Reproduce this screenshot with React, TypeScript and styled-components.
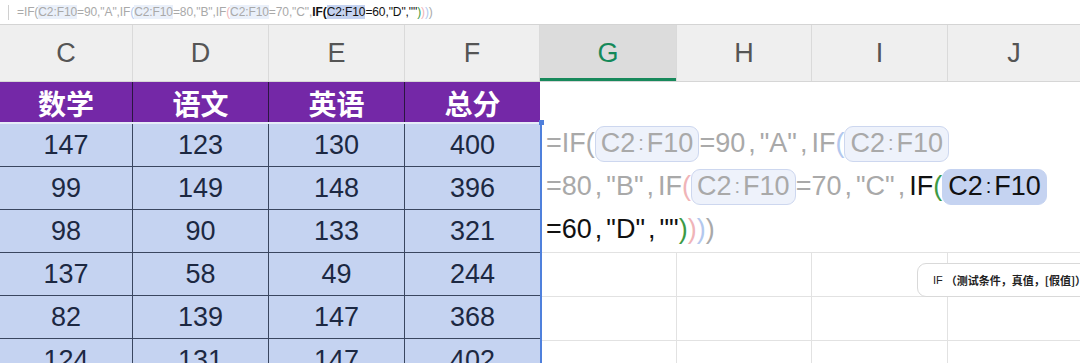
import React from "react";
import styled, { createGlobalStyle } from "styled-components";

const GlobalStyle = createGlobalStyle`
  html, body {
    margin: 0;
    padding: 0;
    background: #ffffff;
  }
  body {
    width: 1080px;
    height: 363px;
    overflow: hidden;
    font-family: "Liberation Sans", "Noto Sans CJK SC", sans-serif;
  }
`;

const GRAY = "#a9a9a9";
const BLUE = "#b3c8ee";
const PINK = "#f0b4b8";
const GREEN = "#3d9a45";
const BLACK = "#111111";

const StyledFormulaBar = styled.div`
  display: flex;
  align-items: center;
  height: 24px;
  padding-left: 8px;
  border-bottom: 1px solid #d4d4d4;
  font-size: 12px;
  letter-spacing: -0.1px;
  white-space: nowrap;
`;

const StyledCaret = styled.div`
  width: 1px;
  height: 15px;
  background: #d0d0d0;
  margin-right: 8px;
`;

const StyledToken = styled.span<{ $color: string; $bold?: boolean }>`
  color: ${(p) => p.$color};
  font-weight: ${(p) => (p.$bold ? 700 : 400)};
`;

const StyledBarRef = styled.span<{ $active?: boolean }>`
  color: ${(p) => (p.$active ? BLACK : GRAY)};
  background: ${(p) => (p.$active ? "#c5d3f1" : "#eaf0fa")};
`;

const StyledHeaderRow = styled.div`
  display: grid;
  grid-template-columns: 133px 136px 136px 135px 137px 135px 136px 132px;
  height: 56px;
  background: #efefef;
  border-bottom: 1px solid #d6d6d6;
`;

const StyledHeaderCell = styled.div<{ $active?: boolean }>`
  display: flex;
  align-items: center;
  justify-content: center;
  font-size: 27px;
  color: ${(p) => (p.$active ? "#15895a" : "#555555")};
  background: ${(p) => (p.$active ? "#dcdcdc" : "transparent")};
  box-shadow: ${(p) => (p.$active ? "inset 0 -3px 0 #17895b" : "none")};
  border-right: 1px solid #dadada;
  &:last-child {
    border-right: none;
  }
`;

const StyledBody = styled.div`
  display: flex;
`;

const StyledLeft = styled.div`
  width: 540px;
  flex-shrink: 0;
`;

const StyledRow = styled.div`
  display: grid;
  grid-template-columns: 133px 136px 136px 135px;
`;

const StyledTitleCell = styled.div`
  display: flex;
  align-items: center;
  justify-content: center;
  height: 40px;
  padding-top: 1px;
  box-sizing: border-box;
  background: #7428a7;
  color: #ffffff;
  font-family: "Noto Sans CJK SC", sans-serif;
  font-weight: 700;
  font-size: 28px;
  border-right: 1px solid #2a1640;
  &:last-child {
    border-right: none;
  }
`;

const StyledSelection = styled.div`
  position: relative;
  border-top: 2px solid #e6ecf8;
  &::after {
    content: "";
    position: absolute;
    top: -2px;
    right: -2px;
    bottom: 0;
    width: 2px;
    background: #4f80dc;
    z-index: 2;
  }
`;

const StyledHandle = styled.div`
  position: absolute;
  top: -4px;
  right: -4px;
  width: 5px;
  height: 5px;
  background: #4f80dc;
  z-index: 3;
`;

const StyledDataCell = styled.div`
  display: flex;
  align-items: center;
  justify-content: center;
  height: 43px;
  box-sizing: border-box;
  background: #c5d3f1;
  color: #1c2842;
  font-size: 27px;
  border-right: 1px solid #3a4660;
  border-bottom: 1px solid #3a4660;
  &:nth-child(4n) {
    border-right: none;
  }
`;

const StyledRight = styled.div`
  position: relative;
  flex: 1;
`;

const StyledEditor = styled.div`
  height: 170px;
  box-sizing: border-box;
  padding: 40px 0 0 6px;
  background: #ffffff;
  font-size: 27px;
  white-space: nowrap;
`;

const StyledEditorLine = styled.div`
  display: flex;
  align-items: center;
  height: 43px;
`;

const StyledEditorRef = styled.span<{ $active?: boolean }>`
  display: inline-flex;
  align-items: center;
  height: 36px;
  padding: 0 5px;
  box-sizing: border-box;
  border-radius: 9px;
  color: ${(p) => (p.$active ? BLACK : GRAY)};
  background: ${(p) => (p.$active ? "#c5d3f1" : "#eef2fb")};
  border: 1px solid ${(p) => (p.$active ? "#c5d3f1" : "#cdd7ef")};
`;

const StyledColon = styled.span`
  font-size: 20px;
  margin: 0 3px;
`;

const StyledComma = styled.span`
  margin: 0 4px 0 3px;
`;

const StyledGridRow = styled.div`
  display: grid;
  grid-template-columns: 137px 135px 136px 132px;
  height: 43px;
  border-top: 1px solid #e2e2e2;
`;

const StyledGridCell = styled.div`
  border-right: 1px solid #e2e2e2;
  &:last-child {
    border-right: none;
  }
`;

const StyledTooltip = styled.div`
  position: absolute;
  left: 377px;
  top: 181px;
  width: 220px;
  height: 34px;
  box-sizing: border-box;
  padding-left: 15px;
  display: flex;
  align-items: center;
  background: #ffffff;
  border: 1px solid #d9d9d9;
  border-radius: 9px;
  font-size: 11px;
  color: #222222;
  white-space: nowrap;
  z-index: 4;
`;

const StyledTooltipArgs = styled.span`
  font-family: "Noto Sans CJK SC", sans-serif;
  font-weight: 700;
  margin-left: 3px;
`;

const letters = ["C", "D", "E", "F", "G", "H", "I", "J"];
const titles = ["数学", "语文", "英语", "总分"];
const scores = [
  [147, 123, 130, 400],
  [99, 149, 148, 396],
  [98, 90, 133, 321],
  [137, 58, 49, 244],
  [82, 139, 147, 368],
  [124, 131, 147, 402],
];

// renders a formula fragment with spaced commas for the cell editor
const Spaced = ({ text, color }: { text: string; color: string }) => {
  const parts = text.split(",");
  return (
    <StyledToken $color={color}>
      {parts.map((part, i) => (
        <React.Fragment key={i}>
          {part}
          {i < parts.length - 1 && <StyledComma>,</StyledComma>}
        </React.Fragment>
      ))}
    </StyledToken>
  );
};

const EditorRef = ({ active }: { active?: boolean }) => (
  <StyledEditorRef $active={active}>
    C2<StyledColon>:</StyledColon>F10
  </StyledEditorRef>
);

const App = () => {
  return (
    <>
      <GlobalStyle />
      <StyledFormulaBar>
        <StyledCaret />
        <StyledToken $color={GRAY}>=IF(</StyledToken>
        <StyledBarRef>C2:F10</StyledBarRef>
        <StyledToken $color={GRAY}>=90,"A",IF</StyledToken>
        <StyledToken $color={BLUE}>(</StyledToken>
        <StyledBarRef>C2:F10</StyledBarRef>
        <StyledToken $color={GRAY}>=80,"B",IF</StyledToken>
        <StyledToken $color={PINK}>(</StyledToken>
        <StyledBarRef>C2:F10</StyledBarRef>
        <StyledToken $color={GRAY}>=70,"C",</StyledToken>
        <StyledToken $color={BLACK} $bold>
          IF(
        </StyledToken>
        <StyledBarRef $active>C2:F10</StyledBarRef>
        <StyledToken $color={BLACK}>=60,"D",""</StyledToken>
        <StyledToken $color={GREEN}>)</StyledToken>
        <StyledToken $color={PINK}>)</StyledToken>
        <StyledToken $color={BLUE}>)</StyledToken>
        <StyledToken $color={GRAY}>)</StyledToken>
      </StyledFormulaBar>

      <StyledHeaderRow>
        {letters.map((l) => (
          <StyledHeaderCell key={l} $active={l === "G"}>
            {l}
          </StyledHeaderCell>
        ))}
      </StyledHeaderRow>

      <StyledBody>
        <StyledLeft>
          <StyledRow>
            {titles.map((t) => (
              <StyledTitleCell key={t}>{t}</StyledTitleCell>
            ))}
          </StyledRow>
          <StyledSelection>
            <StyledHandle />
            <StyledRow>
              {scores.flat().map((n, i) => (
                <StyledDataCell key={i}>{n}</StyledDataCell>
              ))}
            </StyledRow>
          </StyledSelection>
        </StyledLeft>

        <StyledRight>
          <StyledEditor>
            <StyledEditorLine>
              <Spaced text="=IF(" color={GRAY} />
              <EditorRef />
              <Spaced text={'=90,"A",IF'} color={GRAY} />
              <StyledToken $color={BLUE}>(</StyledToken>
              <EditorRef />
            </StyledEditorLine>
            <StyledEditorLine>
              <Spaced text={'=80,"B",IF'} color={GRAY} />
              <StyledToken $color={PINK}>(</StyledToken>
              <EditorRef />
              <Spaced text={'=70,"C",'} color={GRAY} />
              <StyledToken $color={BLACK}>IF</StyledToken>
              <StyledToken $color={GREEN}>(</StyledToken>
              <EditorRef active />
            </StyledEditorLine>
            <StyledEditorLine>
              <Spaced text={'=60,"D",""'} color={BLACK} />
              <StyledToken $color={GREEN}>)</StyledToken>
              <StyledToken $color={PINK}>)</StyledToken>
              <StyledToken $color={BLUE}>)</StyledToken>
              <StyledToken $color={GRAY}>)</StyledToken>
            </StyledEditorLine>
          </StyledEditor>
          {[0, 1, 2].map((r) => (
            <StyledGridRow key={r}>
              {[0, 1, 2, 3].map((c) => (
                <StyledGridCell key={c} />
              ))}
            </StyledGridRow>
          ))}
          <StyledTooltip>
            IF
            <StyledTooltipArgs>（测试条件，真值，[假值]）</StyledTooltipArgs>
          </StyledTooltip>
        </StyledRight>
      </StyledBody>
    </>
  );
};

export default App;
